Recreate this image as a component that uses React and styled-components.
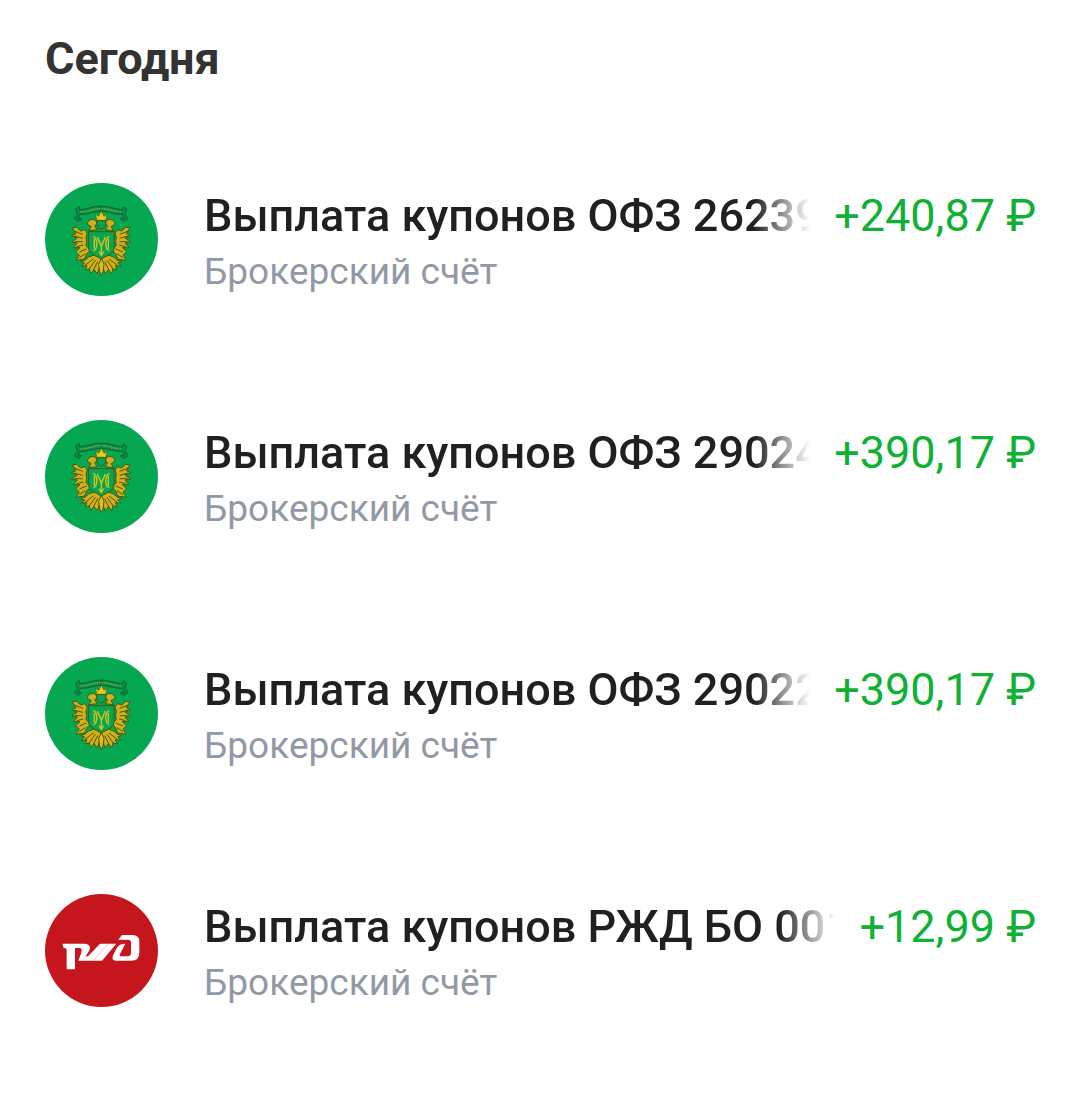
import React from 'react';
import styled, { createGlobalStyle } from 'styled-components';

const COLOR_GREEN = '#0fb135';
const COLOR_GOLD = '#d6ae17';
const COLOR_OLIVE = '#3f5a14';
const COLOR_TREASURY = '#06a751';

const GlobalStyle = createGlobalStyle`
  body {
    margin: 0;
    background: #fff;
    font-family: Roboto, 'Noto Sans', sans-serif;
  }
`;

const Page = styled.main`
  padding: 31px 44px 31px 45px;
`;

const Heading = styled.h2`
  margin: 0 0 34px;
  color: #333;
  font-size: 45px;
  font-weight: 700;
  line-height: 56px;
`;

const List = styled.ul`
  margin: 0;
  padding: 0;
  list-style: none;
`;

const Row = styled.li`
  display: grid;
  grid-template-columns: 113px 1fr;
  column-gap: 46px;
  align-items: center;
  padding: 62px 0;
`;

const Logo = styled.svg`
  display: block;
  width: 113px;
  height: 113px;
`;

const Details = styled.div`
  min-width: 0;
`;

const TopLine = styled.div`
  display: flex;
  gap: 20px;
`;

const Title = styled.div`
  flex: 1;
  min-width: 0;
  overflow: hidden;
  color: #202022;
  font-size: 45px;
  font-weight: 500;
  line-height: 64px;
  white-space: nowrap;
  mask-image: linear-gradient(to left, transparent 4px, #000 60px);
`;

const Amount = styled.div`
  color: ${COLOR_GREEN};
  font-size: 45px;
  line-height: 64px;
  white-space: nowrap;
`;

const Account = styled.div`
  color: #9299a6;
  font-size: 37px;
  line-height: 48px;
`;

// left half of the eagle, the right one is its mirror image
function EagleHalf() {
  return (
    <g stroke={COLOR_OLIVE} strokeWidth="3" strokeLinejoin="round">
      <path
        d="M97 148 L110 147 L122 158 L134 154 L142 164 L138 176 L140 190 L138 202 L152 216 L140 226 L134 242 L108 246 L118 230 L107 220 L120 208 L100 208 L112 194 L95 191 L112 179 L94 172 L108 166 Z"
        fill={COLOR_GOLD}
      />
      <path
        d="M102 158 L128 168 M102 173 L128 180 M104 190 L128 190 M110 205 L130 200 M118 221 L140 212 M118 238 L136 226"
        fill="none"
      />
      <path
        d="M142 138 C144 118 172 120 170 136 L164 144 L172 154 L146 157 L154 145 Z"
        fill={COLOR_GOLD}
      />
      <path
        d="M122 250 Q136 248 146 236 L162 230 L184 240 L180 262 L172 286 L162 274 L152 286 L148 272 L136 274 L141 262 L124 264 L134 254 Z"
        fill={COLOR_GOLD}
      />
      <path d="M134 262 L160 242 M146 274 L166 246 M160 276 L173 250" fill="none" />
      <path
        d="M107 92 L118 85 V94 C140 94 160 83 184 83 V99 C160 99 142 110 120 108 L114 120 L126 121 L116 129 L103 121 L112 108 Z"
        fill="#08904a"
        stroke="#125f31"
        strokeWidth="3"
      />
    </g>
  );
}

function TreasuryLogo() {
  return (
    <Logo viewBox="15 14 339 339" fill="none" aria-hidden="true">
      <circle cx="184.5" cy="183.5" r="169.5" fill={COLOR_TREASURY} />
      <EagleHalf />
      <g transform="matrix(-1 0 0 1 367 0)">
        <EagleHalf />
      </g>
      <path
        d="M122 101 C146 100 160 91 184 91 C208 91 222 100 246 101"
        stroke="#7fb53a"
        strokeWidth="4"
        strokeDasharray="4 3"
      />
      <path
        d="M166 107 L176 114 L184 98 L192 114 L202 107 L197 126 H171 Z"
        fill="#f0c81c"
        stroke={COLOR_OLIVE}
        strokeWidth="2"
      />
      <path
        d="M171 127 H197 V140 Q194 148 184 153 Q174 148 171 140 Z"
        fill={COLOR_TREASURY}
        stroke={COLOR_OLIVE}
        strokeWidth="3"
      />
      <path
        d="M146 160 H222 V209 C222 226 204 230 184 242 C164 230 146 226 146 209 Z"
        fill={COLOR_TREASURY}
        stroke={COLOR_OLIVE}
        strokeWidth="3"
      />
      <path
        d="M160 174 C174 182 174 210 160 218 M208 174 C194 182 194 210 208 218 M163 182 V211 M205 182 V211 M172 176 L184 204 L196 176 M184 196 V232 M177 220 L184 231 L191 220"
        stroke="#e2c01c"
        strokeWidth="4"
      />
      <path
        d="M184 240 L192 258 L189 280 L184 292 L179 280 L176 258 Z"
        fill="#e6bf18"
        stroke={COLOR_OLIVE}
        strokeWidth="3"
      />
    </Logo>
  );
}

function RailwaysLogo() {
  return (
    <Logo viewBox="15 14 339 339" aria-hidden="true">
      <circle cx="184.5" cy="183.5" r="169.5" fill="#c5161d" />
      <g fill="#fff">
        <path d="M67 163 H132 Q151 163 150 177 Q149 183 144 190 L136 201 H144 L180 163 H204 L160 214 H115 L124 190 Q128 176 118 176 H105 V240 H80 V182 Q80 176 74 176 H71 Z" />
        <path d="M204 163 H229 L186 214 H160 L172 200 Z" />
        <path d="M246 137 H277 Q298 137 298 157 V190 Q298 214 274 214 H230 Q213 214 219 199 L230 176 Q238 163 256 163 L240 194 Q237 201 244 201 H262 Q273 201 273 191 V160 Q273 151 264 151 H235 Z" />
      </g>
    </Logo>
  );
}

const PAYMENTS = [
  { id: 1, logo: TreasuryLogo, title: 'Выплата купонов ОФЗ 26239', amount: '+240,87 ₽' },
  { id: 2, logo: TreasuryLogo, title: 'Выплата купонов ОФЗ 29024', amount: '+390,17 ₽' },
  { id: 3, logo: TreasuryLogo, title: 'Выплата купонов ОФЗ 29022', amount: '+390,17 ₽' },
  { id: 4, logo: RailwaysLogo, title: 'Выплата купонов РЖД БО 001', amount: '+12,99 ₽' },
];

export default function App() {
  return (
    <Page>
      <GlobalStyle />
      <Heading>Сегодня</Heading>
      <List>
        {PAYMENTS.map(({ id, logo: Icon, title, amount }) => (
          <Row key={id}>
            <Icon />
            <Details>
              <TopLine>
                <Title>{title}</Title>
                <Amount>{amount}</Amount>
              </TopLine>
              <Account>Брокерский счёт</Account>
            </Details>
          </Row>
        ))}
      </List>
    </Page>
  );
}
